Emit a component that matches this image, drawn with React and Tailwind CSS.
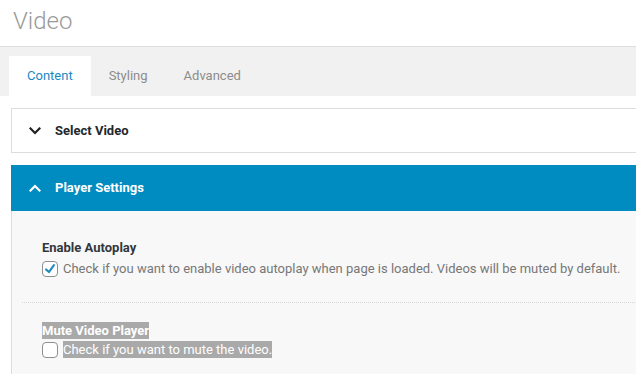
import React from "react";

function Chevron({ up, className }) {
  return (
    <svg viewBox="0 0 12 8" className={className} fill="none" stroke="currentColor" strokeWidth="2.2" strokeLinecap="square">
      {up ? <polyline points="1.5,6.5 6,2 10.5,6.5" /> : <polyline points="1.5,1.5 6,6 10.5,1.5" />}
    </svg>
  );
}

function Checkbox({ checked }) {
  return (
    <span className="w-4 h-4 shrink-0 rounded-[4px] border border-[#8c8f94] bg-white flex items-center justify-center">
      {checked && (
        <svg viewBox="0 0 16 16" className="w-[14px] h-[14px]" fill="none" stroke="#1e8cbe" strokeWidth="2.4" strokeLinecap="round" strokeLinejoin="round">
          <polyline points="3.5,8.5 6.8,11.5 12.5,3.5" />
        </svg>
      )}
    </span>
  );
}

export default function App() {
  const tabs = ["Content", "Styling", "Advanced"];

  return (
    <div className="w-[636px] h-[374px] overflow-hidden bg-white font-['Roboto',sans-serif]">
      <header className="h-[47px] border-b border-[#dddddd] pl-[13px] pt-[5px]">
        <h1 className="text-[24px] font-light text-[#9a9a9a] leading-[32px]">Video</h1>
      </header>

      <nav className="h-[49px] bg-[#f1f1f1] flex items-end pl-[9px]">
        {tabs.map((t, i) => (
          <div
            key={t}
            className={
              i === 0
                ? "h-10 px-[18px] bg-white text-[#1a8ac4] text-[13px] flex items-center"
                : "h-10 px-[18px] text-[#8c8c8c] text-[13px] flex items-center"
            }
          >
            {t}
          </div>
        ))}
      </nav>

      <div className="pt-3 pl-[11px]">
        <div className="w-[640px] h-[45px] border border-[#dddddd] bg-white flex items-center pl-[17px] gap-[14px]">
          <Chevron className="w-[12px] h-[8px] text-[#222]" />
          <span className="text-[13px] font-bold text-[#23282d]">Select Video</span>
        </div>

        <div className="mt-3 w-[640px] h-[46px] bg-[#008cc1] flex items-center pl-[18px] gap-[14px]">
          <Chevron up className="w-[12px] h-[8px] text-white" />
          <span className="text-[13px] font-bold text-white">Player Settings</span>
        </div>

        <div className="w-[640px] h-[200px] bg-[#f8f8f8] border-l border-[#dddddd]">
          <div className="pl-[30px] pt-[28px] pb-6">
            <div className="text-[13px] font-bold text-[#32373c] leading-[17px]">Enable Autoplay</div>
            <label className="flex items-center gap-[5px] mt-[4px]">
              <Checkbox checked />
              <span className="text-[13px] text-[#777777] leading-[18px]">
                Check if you want to enable video autoplay when page is loaded. Videos will be muted by default.
              </span>
            </label>
          </div>
          <div className="ml-[10px] border-t border-dotted border-[#d6d6d6]" />
          <div className="pl-[30px] pt-[19px]">
            <div className="flex">
              <span className="bg-[#a9a9a9] text-white text-[13px] font-bold leading-[17px]">Mute Video Player</span>
            </div>
            <label className="flex items-center gap-[5px] mt-[2px]">
              <Checkbox />
              <span className="bg-[#a9a9a9] text-white text-[13px] leading-[17px]">Check if you want to mute the video.</span>
            </label>
          </div>
        </div>
      </div>
    </div>
  );
}
